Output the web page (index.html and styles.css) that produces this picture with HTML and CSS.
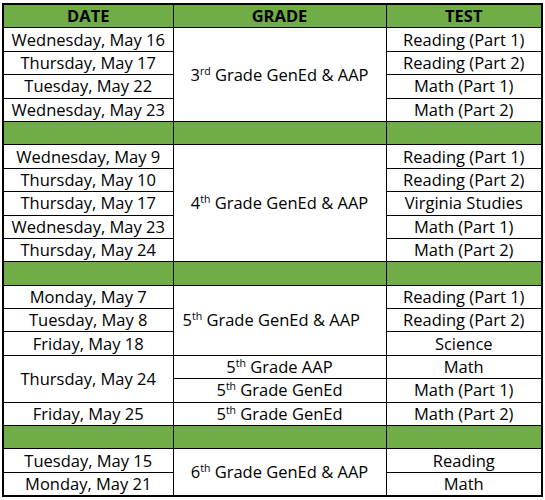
FILE: index.html
```html
<!DOCTYPE html>
<html lang="en">
<head>
<meta charset="utf-8">
<title>Test Schedule</title>
<link rel="stylesheet" href="styles.css">
</head>
<body>
<table class="sched">
  <colgroup>
    <col class="c-date">
    <col class="c-grade">
    <col class="c-test">
  </colgroup>
  <thead>
    <tr class="head"><th>DATE</th><th>GRADE</th><th>TEST</th></tr>
  </thead>
  <tbody>
    <tr><td>Wednesday, May 16</td><td rowspan="4" class="grade">3<sup>rd</sup> Grade GenEd &amp; AAP</td><td>Reading (Part 1)</td></tr>
    <tr><td>Thursday, May 17</td><td>Reading (Part 2)</td></tr>
    <tr><td>Tuesday, May 22</td><td>Math (Part 1)</td></tr>
    <tr><td>Wednesday, May 23</td><td>Math (Part 2)</td></tr>
    <tr class="sep"><td></td><td></td><td></td></tr>
    <tr><td>Wednesday, May 9</td><td rowspan="5" class="grade">4<sup>th</sup> Grade GenEd &amp; AAP</td><td>Reading (Part 1)</td></tr>
    <tr><td>Thursday, May 10</td><td>Reading (Part 2)</td></tr>
    <tr><td>Thursday, May 17</td><td>Virginia Studies</td></tr>
    <tr><td>Wednesday, May 23</td><td>Math (Part 1)</td></tr>
    <tr><td>Thursday, May 24</td><td>Math (Part 2)</td></tr>
    <tr class="sep"><td></td><td></td><td></td></tr>
    <tr><td>Monday, May 7</td><td rowspan="3" class="grade grade-left">5<sup>th</sup> Grade GenEd &amp; AAP</td><td>Reading (Part 1)</td></tr>
    <tr><td>Tuesday, May 8</td><td>Reading (Part 2)</td></tr>
    <tr><td>Friday, May 18</td><td>Science</td></tr>
    <tr><td rowspan="2">Thursday, May 24</td><td>5<sup>th</sup> Grade AAP</td><td>Math</td></tr>
    <tr><td>5<sup>th</sup> Grade GenEd</td><td>Math (Part 1)</td></tr>
    <tr><td>Friday, May 25</td><td>5<sup>th</sup> Grade GenEd</td><td>Math (Part 2)</td></tr>
    <tr class="sep"><td></td><td></td><td></td></tr>
    <tr><td>Tuesday, May 15</td><td rowspan="2" class="grade">6<sup>th</sup> Grade GenEd &amp; AAP</td><td>Reading</td></tr>
    <tr><td>Monday, May 21</td><td>Math</td></tr>
  </tbody>
</table>
</body>
</html>
```

FILE: styles.css
```css
html, body {
  margin: 0;
  background: #ffffff;
}
body {
  padding: 3px 2px 0 2px;
  font-family: "Open Sans", "Liberation Sans", sans-serif;
  font-size: 16.5px;
  color: #000000;
}
.sched {
  border-collapse: collapse;
  table-layout: fixed;
  width: 541px;
  border: 2px solid #000;
}
.c-date { width: 170px; }
.c-grade { width: 213px; }
.c-test { width: 156px; }
.sched th,
.sched td {
  border: 1px solid #000;
  height: 22.4px;
  padding: 0 1px;
  text-align: center;
  vertical-align: middle;
  line-height: 20px;
  white-space: nowrap;
}
.sched th {
  background: #70ad47;
  font-weight: bold;
}
.sep td {
  background: #70ad47;
}
.sched td.grade-left {
  text-align: left;
  padding-left: 9px;
}
sup {
  font-size: 10.5px;
  line-height: 0;
  vertical-align: 6px;
}
```
